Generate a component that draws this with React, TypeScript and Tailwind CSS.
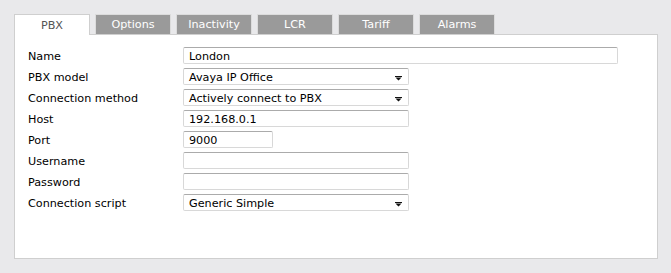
import React from "react";

const Arrow = () => (
  <svg width="8" height="5" viewBox="0 0 8 5" className="absolute right-[5px] top-[7px]">
    <path d="M0 0H7V1H0Z M0.5 1.5H6.5L3.5 4.5Z" fill="#111" />
  </svg>
);

function Field({ label, value, w, select }: { label: string; value: string; w: string; select?: boolean }) {
  return (
    <div className="flex items-center h-[17px]">
      <div className="w-[155px] text-[#000] leading-[17px] pt-[2px]">{label}</div>
      <div
        className={`relative h-[17px] ${w} bg-white border border-[#d8d8d8] border-t-[#ababab] rounded-[2px] pl-[5px] leading-[15px] pt-[1px] text-[#000]`}
      >
        {value}
        {select && <Arrow />}
      </div>
    </div>
  );
}

export default function App() {
  const tabs = ["PBX", "Options", "Inactivity", "LCR", "Tariff", "Alarms"];
  return (
    <div
      className="w-[671px] h-[273px] bg-[#e9e9eb] pt-[14px] pl-[14px] pr-[13px] text-[11.2px]"
      style={{ fontFamily: '"DejaVu Sans", Verdana, sans-serif' }}
    >
      <div className="flex gap-[5px] h-[20px] relative z-10">
        {tabs.map((t, i) =>
          i === 0 ? (
            <div
              key={t}
              className="w-[76px] h-[21px] bg-white border border-b-0 border-[#cfcfcf] flex items-center justify-center pt-[2px] text-[#555]"
            >
              {t}
            </div>
          ) : (
            <div
              key={t}
              className="w-[76px] h-[20px] bg-[#9a9a9a] border border-b-0 border-[#dcdcdc] flex items-center justify-center pt-[2px] text-white"
            >
              {t}
            </div>
          )
        )}
      </div>
      <div className="h-[225px] bg-white border border-[#cfcfcf] pt-[12px] pl-[13px] flex flex-col gap-[4px]">
        <Field label="Name" value="London" w="w-[435px]" />
        <Field label="PBX model" value="Avaya IP Office" w="w-[226px]" select />
        <Field label="Connection method" value="Actively connect to PBX" w="w-[226px]" select />
        <Field label="Host" value="192.168.0.1" w="w-[226px]" />
        <Field label="Port" value="9000" w="w-[90px]" />
        <Field label="Username" value="" w="w-[226px]" />
        <Field label="Password" value="" w="w-[226px]" />
        <Field label="Connection script" value="Generic Simple" w="w-[226px]" select />
      </div>
    </div>
  );
}
